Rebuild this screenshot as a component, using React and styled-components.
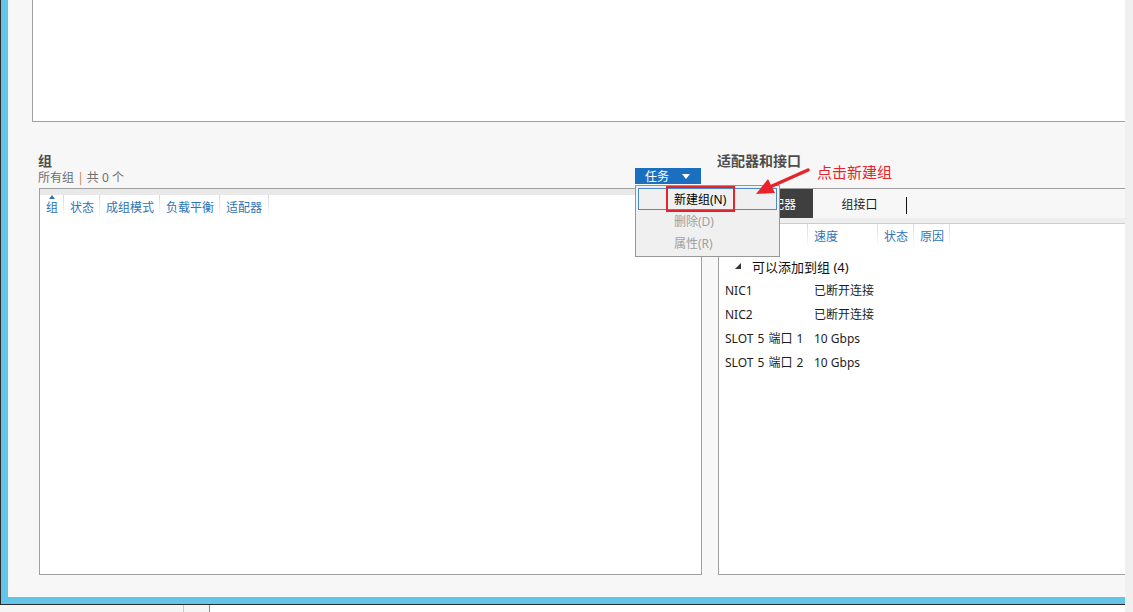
import React from 'react'
import styled, { createGlobalStyle } from 'styled-components'

const GlobalStyle = createGlobalStyle`
  html, body {
    margin: 0;
    padding: 0;
    background: #ffffff;
  }
  body {
    font-family: "Noto Sans", "Noto Sans CJK SC", sans-serif;
    font-size: 12px;
    color: #1e1e1e;
  }
  #root {
    width: 1133px;
    height: 612px;
    overflow: hidden;
  }
`

const groupColumns = [
  { label: '组', width: 24, sorted: true },
  { label: '状态', width: 36 },
  { label: '成组模式', width: 60 },
  { label: '负载平衡', width: 60 },
  { label: '适配器', width: 49 },
]

const adapterColumns = [
  { label: '名称', width: 89 },
  { label: '速度', width: 70 },
  { label: '状态', width: 36 },
  { label: '原因', width: 36 },
]

const adapters = [
  { name: 'NIC1', speed: '已断开连接' },
  { name: 'NIC2', speed: '已断开连接' },
  { name: 'SLOT 5 端口 1', speed: '10 Gbps' },
  { name: 'SLOT 5 端口 2', speed: '10 Gbps' },
]

function App() {
  return (
    <Screen>
      <GlobalStyle />
      <Main>
        <Window>
          <WindowInner>
            <TopPanel />
            <Lower>
              <GroupColumn>
                <SectionHead>
                  <div>
                    <Title>组</Title>
                    <Subtitle>
                      所有组 <Bar>|</Bar> 共 0 个
                    </Subtitle>
                  </div>
                  <TaskWrap>
                    <TaskButton>
                      任务
                      <Caret />
                    </TaskButton>
                    <Menu>
                      <MenuItem $hot>新建组(N)</MenuItem>
                      <MenuItem $disabled>删除(D)</MenuItem>
                      <MenuItem $disabled>属性(R)</MenuItem>
                    </Menu>
                  </TaskWrap>
                </SectionHead>
                <ListBox>
                  <HeaderBand />
                  <HeaderRow $h={23}>
                    {groupColumns.map((c) => (
                      <HeaderCell key={c.label} $w={c.width} $sorted={c.sorted}>
                        {c.label}
                      </HeaderCell>
                    ))}
                  </HeaderRow>
                </ListBox>
              </GroupColumn>

              <AdapterColumn>
                <SectionHead>
                  <Title>适配器和接口</Title>
                </SectionHead>
                <AdapterBox>
                  <TabStrip>
                    <Tab $w={94} $active>网络适配器</Tab>
                    <Tab $w={93}>组接口</Tab>
                    <TabDivider />
                  </TabStrip>
                  <TabBand />
                  <HeaderRow $h={24}>
                    {adapterColumns.map((c) => (
                      <HeaderCell key={c.label} $w={c.width}>
                        {c.label}
                      </HeaderCell>
                    ))}
                  </HeaderRow>
                  <Rows>
                    <GroupRow>
                      <Expander />
                      可以添加到组 (4)
                    </GroupRow>
                    {adapters.map((a) => (
                      <Row key={a.name}>
                        <NameCell>{a.name}</NameCell>
                        <Cell>{a.speed}</Cell>
                      </Row>
                    ))}
                  </Rows>
                </AdapterBox>
              </AdapterColumn>
            </Lower>
          </WindowInner>
        </Window>
        <Taskbar>
          <TaskSeg $w={184} $line="#c9c9c9" />
          <TaskSeg $w={26} $line="#8a8a8a" />
        </Taskbar>
      </Main>
      <SideStrip />

      {/* annotation */}
      <Callout />
      <ArrowSvg width="70" height="40" viewBox="750 164 70 40">
        <line x1="771" y1="186.5" x2="808" y2="170" stroke="#e8232a" strokeWidth="3.5" strokeLinecap="round" />
        <polygon points="756,194 775,193 768,179" fill="#e8232a" />
      </ArrowSvg>
      <CalloutText>点击新建组</CalloutText>
    </Screen>
  )
}

export default App

const Screen = styled.div`
  position: relative;
  display: flex;
  width: 1133px;
  height: 612px;
  overflow: hidden;
`

const Main = styled.div`
  width: 1125px;
  display: flex;
  flex-direction: column;
`

const Window = styled.div`
  height: 605px;
  box-sizing: border-box;
  border-left: 1px solid #2b2b2b;
  border-bottom: 1px solid #2b2b2b;
  overflow: hidden;
`

const WindowInner = styled.div`
  height: 100%;
  box-sizing: border-box;
  border-left: 7px solid #63c6e8;
  border-bottom: 7px solid #63c6e8;
  background: #f7f7f7;
  display: flex;
  flex-direction: column;
`

const TopPanel = styled.div`
  flex: none;
  height: 122px;
  margin-left: 24px;
  box-sizing: border-box;
  background: #ffffff;
  border-left: 1px solid #a0a0a0;
  border-bottom: 1px solid #a0a0a0;
`

const Lower = styled.div`
  flex: 1;
  min-height: 0;
  display: flex;
  gap: 15px;
  padding: 0 0 22px 30px;
`

const GroupColumn = styled.div`
  width: 664px;
  flex: none;
  display: flex;
  flex-direction: column;
`

const AdapterColumn = styled.div`
  flex: 1;
  min-width: 0;
  display: flex;
  flex-direction: column;
`

const SectionHead = styled.div`
  flex: none;
  height: 66px;
  box-sizing: border-box;
  padding-top: 30px;
  display: flex;
  justify-content: space-between;
`

const Title = styled.div`
  font-size: 14px;
  line-height: 18px;
  font-weight: bold;
  color: #4d4d4d;
`

const Subtitle = styled.div`
  font-size: 12px;
  line-height: 15px;
  color: #6e6e6e;
`

const Bar = styled.span`
  color: #c4874c;
`

const TaskWrap = styled.div`
  position: relative;
  align-self: flex-end;
  margin: 0 1px 4px 0;
`

const TaskButton = styled.div`
  width: 66px;
  height: 16px;
  box-sizing: border-box;
  padding: 1px 0 0 10px;
  display: flex;
  align-items: center;
  background: #1a6fbf;
  color: #ffffff;
  font-size: 12px;
  line-height: 15px;
`

const Caret = styled.span`
  margin-left: 13px;
  width: 0;
  height: 0;
  border-left: 4.5px solid transparent;
  border-right: 4.5px solid transparent;
  border-top: 5px solid #ffffff;
`

const Menu = styled.div`
  position: absolute;
  top: 17px;
  left: 0;
  z-index: 10;
  width: 145px;
  height: 72px;
  box-sizing: border-box;
  padding: 2px;
  background: #f0f0f0;
  border: 1px solid #979797;

  &::before {
    content: '';
    position: absolute;
    left: 31px;
    top: 2px;
    bottom: 2px;
    width: 1px;
    background: #d2d2d2;
  }
`

const MenuItem = styled.div`
  position: relative;
  height: 22px;
  box-sizing: border-box;
  padding: 1px 0 0 35px;
  line-height: 19px;
  font-size: 12px;
  border: 1px solid ${(p) => (p.$hot ? '#4a8cc9' : 'transparent')};
  background: #f0f0f0;
  color: ${(p) => (p.$disabled ? '#a0a0a0' : '#000000')};
`

const ListBox = styled.div`
  flex: 1;
  margin-left: 1px;
  background: #ffffff;
  border: 1px solid #a0a0a0;
  display: flex;
  flex-direction: column;
`

const HeaderBand = styled.div`
  flex: none;
  height: 6px;
  background: #e9e9e9;
`

const HeaderRow = styled.div`
  flex: none;
  display: flex;
  height: ${(p) => p.$h}px;
  background: #ffffff;
`

const HeaderCell = styled.div`
  position: relative;
  width: ${(p) => p.$w}px;
  flex: none;
  box-sizing: border-box;
  padding-left: 6px;
  font-size: 12px;
  display: flex;
  align-items: center;
  color: #2f73b6;
  white-space: nowrap;
  overflow: hidden;
  background: linear-gradient(to bottom, #d8d8d8, #ffffff) right top / 1px 100% no-repeat;

  ${(p) =>
    p.$sorted &&
    `
    &::before {
      content: '';
      position: absolute;
      top: 0;
      left: 9px;
      border-left: 3px solid transparent;
      border-right: 3px solid transparent;
      border-bottom: 4px solid #2f73b6;
    }
  `}
`

const AdapterBox = styled.div`
  flex: 1;
  margin-left: 1px;
  background: #ffffff;
  border: 1px solid #a0a0a0;
  border-right: none;
  display: flex;
  flex-direction: column;
`

const TabStrip = styled.div`
  flex: none;
  height: 29px;
  display: flex;
  background: #f7f7f7;
`

const Tab = styled.div`
  width: ${(p) => p.$w}px;
  flex: none;
  display: flex;
  align-items: center;
  justify-content: center;
  font-size: 12px;
  background: ${(p) => (p.$active ? '#3f3f3f' : 'transparent')};
  color: ${(p) => (p.$active ? '#ffffff' : '#1e1e1e')};
`

const TabDivider = styled.div`
  width: 1px;
  height: 17px;
  margin-top: 8px;
  background: #111111;
`

const TabBand = styled.div`
  flex: none;
  height: 5px;
  background: #eeeeee;
  border-bottom: 1px solid #cdcdcd;
`

const Rows = styled.div`
  padding-top: 6px;
`

const GroupRow = styled.div`
  height: 24px;
  display: flex;
  align-items: center;
  gap: 11px;
  padding-left: 16px;
  font-size: 13px;
  color: #111111;
`

const Expander = styled.span`
  width: 0;
  height: 0;
  border-left: 6px solid transparent;
  border-bottom: 6px solid #333333;
`

const Row = styled.div`
  height: 24px;
  display: flex;
  align-items: center;
  font-size: 12px;
  color: #1e1e1e;
`

const NameCell = styled.div`
  width: 89px;
  box-sizing: border-box;
  padding-left: 6px;
  white-space: nowrap;
  word-spacing: 1px;
`

const Cell = styled.div`
  padding-left: 6px;
  white-space: nowrap;
`

const Taskbar = styled.div`
  flex: 1;
  display: flex;
  background: #ffffff;
`

const TaskSeg = styled.div`
  width: ${(p) => p.$w}px;
  box-sizing: border-box;
  background: #f5f5f5;
  border-right: 1px solid ${(p) => p.$line};
`

const SideStrip = styled.div`
  width: 8px;
  background: #f0f0f0;
`

const Callout = styled.div`
  position: absolute;
  left: 666px;
  top: 186px;
  width: 69px;
  height: 26px;
  box-sizing: border-box;
  border: 2px solid #e0262c;
  z-index: 20;
`

const ArrowSvg = styled.svg`
  position: absolute;
  left: 750px;
  top: 164px;
  z-index: 20;
`

const CalloutText = styled.div`
  position: absolute;
  left: 817px;
  top: 161px;
  font-size: 15px;
  line-height: 22px;
  color: #e8232a;
  z-index: 20;
`
